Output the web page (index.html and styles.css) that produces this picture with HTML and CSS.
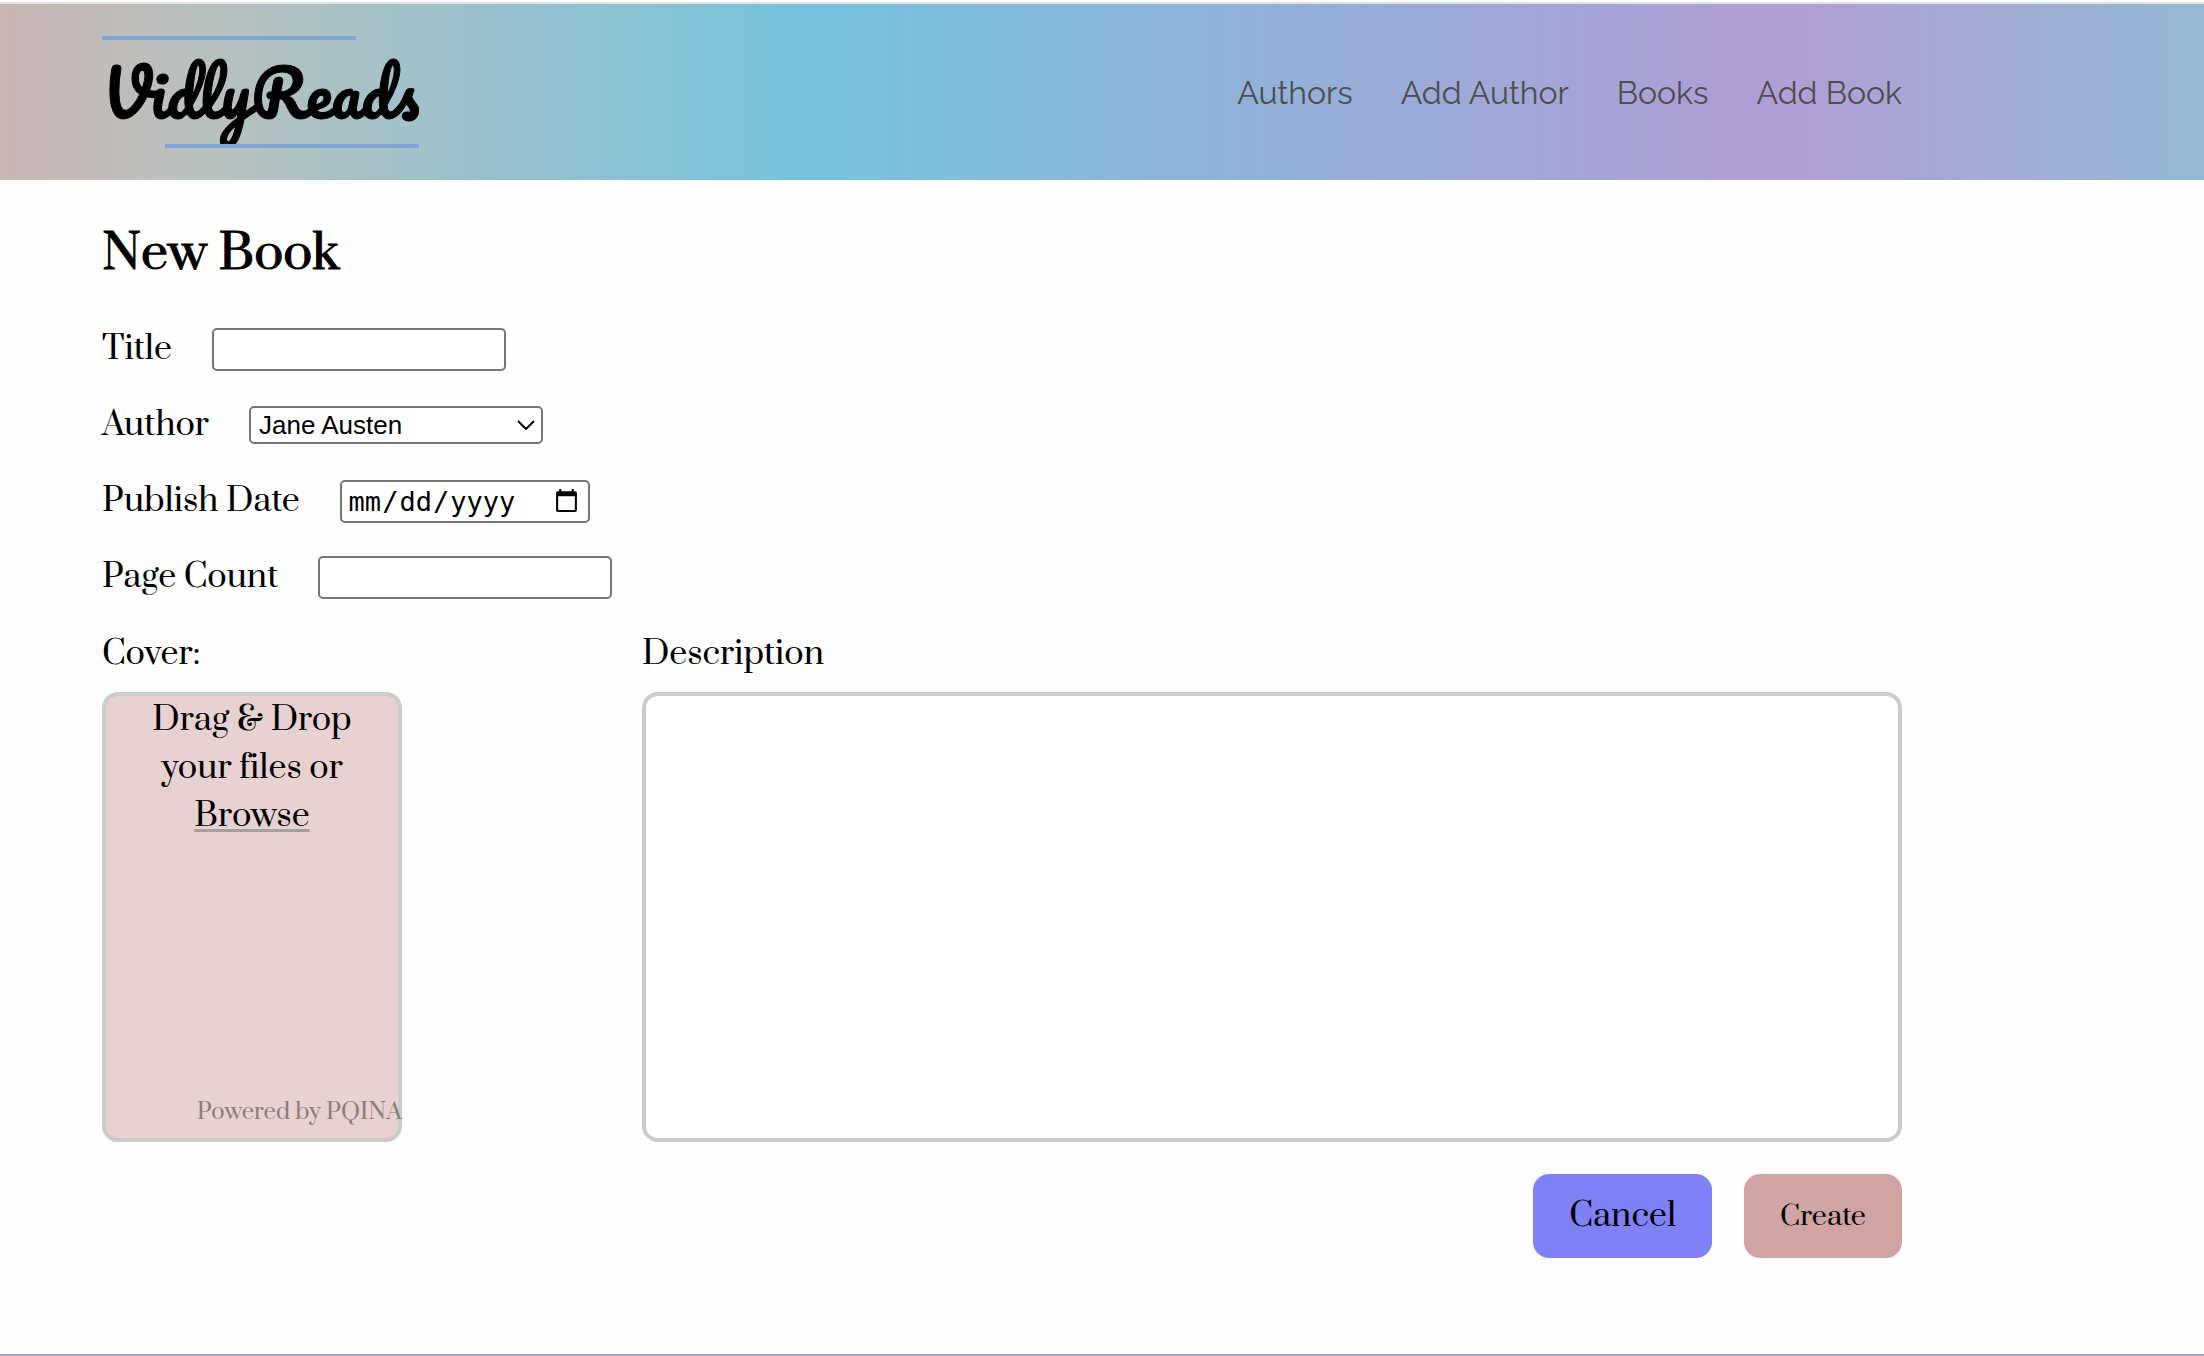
FILE: index.html
```html
<!DOCTYPE html>
<html lang="en">
<head>
  <meta charset="utf-8">
  <meta name="viewport" content="width=device-width, initial-scale=1">
  <title>VidlyReads</title>
  <link rel="stylesheet" href="styles.css">
</head>
<body>
  <header class="header">
    <a class="logo" href="#">VidlyReads</a>
    <nav class="nav">
      <a href="#">Authors</a>
      <a href="#">Add Author</a>
      <a href="#">Books</a>
      <a href="#">Add Book</a>
    </nav>
  </header>
  <main class="main">
    <h1 class="page-title">New Book</h1>
    <form class="form">
      <div class="form-row">
        <label for="title">Title</label>
        <input class="field" id="title" type="text">
      </div>
      <div class="form-row">
        <label for="author">Author</label>
        <div class="select-wrap">
          <select class="field field-select" id="author">
            <option>Jane Austen</option>
          </select>
          <svg class="chevron" viewBox="0 0 18 10" aria-hidden="true"><path d="M1 1 9 9 17 1"/></svg>
        </div>
      </div>
      <div class="form-row">
        <label for="publish-date">Publish Date</label>
        <input class="field field-date" id="publish-date" type="date">
      </div>
      <div class="form-row">
        <label for="page-count">Page Count</label>
        <input class="field" id="page-count" type="text">
      </div>
      <div class="media-row">
        <div class="media-item">
          <label for="cover">Cover:</label>
          <div class="dropzone">
            <input class="file-input" id="cover" type="file">
            <label class="drop-label" for="cover">Drag &amp; Drop your files or <span class="browse">Browse</span></label>
            <a class="credits" href="#">Powered by PQINA</a>
          </div>
        </div>
        <div class="media-item media-item-wide">
          <label for="description">Description</label>
          <textarea class="description" id="description"></textarea>
        </div>
      </div>
      <div class="actions">
        <a class="btn btn-cancel" href="#">Cancel</a>
        <button class="btn btn-create" type="submit">Create</button>
      </div>
    </form>
  </main>
  <footer class="footer"></footer>
</body>
</html>
```
FILE: styles.css
```css
*,
*::before,
*::after {
  box-sizing: border-box;
}

body {
  margin: 0;
  padding-top: 2px;
  background: #fefefe;
  color: #000;
  font-family: Prata, "Liberation Serif", serif;
  font-size: 32px;
  line-height: 48px;
}

.header {
  display: flex;
  align-items: center;
  justify-content: space-between;
  height: 178px;
  padding: 0 302px 0 102px;
  border-top: 2px solid #e0e3e2;
  background: linear-gradient(to right, #c9b5b5 0%, #b9c1be 9%, #76c2dc 36%, #76c2dc 38%, #b09dd5 80%, #b09fd6 82%, #93b8d4 100%);
}

.logo {
  position: relative;
  overflow: hidden;
  height: 112px;
  color: #000;
  font-family: Pacifico, "Liberation Serif", cursive;
  font-size: 64px;
  line-height: 112px;
  text-decoration: none;
  -webkit-text-stroke: 1px #000;
}

.logo::before,
.logo::after {
  content: "";
  position: absolute;
  width: 80%;
  height: 4px;
  background: #7fa5d2;
}

.logo::before {
  top: 0;
  left: 0;
}

.logo::after {
  right: 0;
  bottom: 0;
}

.nav {
  display: flex;
  gap: 48px;
  padding-top: 2px;
  font-family: Raleway, Lato, sans-serif;
  font-size: 32px;
}

.nav a {
  color: #4e4e4e;
  text-decoration: none;
}

.main {
  padding: 38px 302px 96px 102px;
}

.page-title {
  margin: 0 0 35px;
  font-size: 48px;
  font-weight: 400;
  line-height: 72px;
  -webkit-text-stroke: 1px #000;
}

.form {
  display: flex;
  flex-direction: column;
  gap: 28px;
}

.form-row {
  display: flex;
  align-items: center;
  gap: 40px;
  height: 48px;
}

.field {
  width: 294px;
  height: 43px;
  margin: 0;
  padding: 2px 8px;
  border: 2px solid #767676;
  border-radius: 5px;
  background: #fff;
  color: #000;
  font-family: "Liberation Sans", sans-serif;
  font-size: 26px;
}

.select-wrap {
  position: relative;
  display: flex;
}

.field-select {
  height: 38px;
  padding: 0 8px;
  appearance: none;
}

.chevron {
  position: absolute;
  top: 14px;
  right: 8px;
  width: 18px;
  height: 10px;
  fill: none;
  stroke: #000;
  stroke-width: 2;
  pointer-events: none;
}

.field-date {
  width: 250px;
  padding: 2px 6px;
  font-family: "DejaVu Sans Mono", monospace;
  font-size: 27px;
}

.media-row {
  display: flex;
  gap: 240px;
  padding-top: 1px;
}

.media-item {
  display: flex;
  flex-direction: column;
  gap: 14px;
}

.media-item-wide {
  flex: 1;
}

.dropzone {
  display: flex;
  flex-direction: column;
  justify-content: space-between;
  width: 300px;
  height: 450px;
  border: 4px solid #cbcbcb;
  border-radius: 16px;
  background: #e7d1d1;
  text-align: center;
}

.file-input {
  position: absolute;
  width: 1px;
  height: 1px;
  opacity: 0;
}

.drop-label {
  padding: 0 36px;
}

.browse {
  text-decoration: underline #a3a09e 3px;
  text-underline-offset: 3px;
}

.credits {
  align-self: flex-end;
  margin-right: -4px;
  padding-bottom: 2px;
  color: #8a7d7d;
  font-size: 22px;
  text-decoration: none;
}

.description {
  height: 450px;
  margin: 0;
  padding: 16px;
  border: 4px solid #cbcbcb;
  border-radius: 16px;
  background: #fff;
  font: inherit;
  resize: none;
}

.actions {
  display: flex;
  justify-content: flex-end;
  gap: 32px;
  padding-top: 4px;
}

.btn {
  display: flex;
  align-items: center;
  height: 84px;
  padding: 0 36px;
  border: 0;
  border-radius: 16px;
  color: #000;
  font-family: inherit;
  text-decoration: none;
}

.btn-cancel {
  background: #8080f7;
  font-size: 32px;
}

.btn-create {
  background: #d0a4a3;
  font-size: 27px;
}

.footer {
  height: 3px;
  background: #a9a1d3;
}
```
